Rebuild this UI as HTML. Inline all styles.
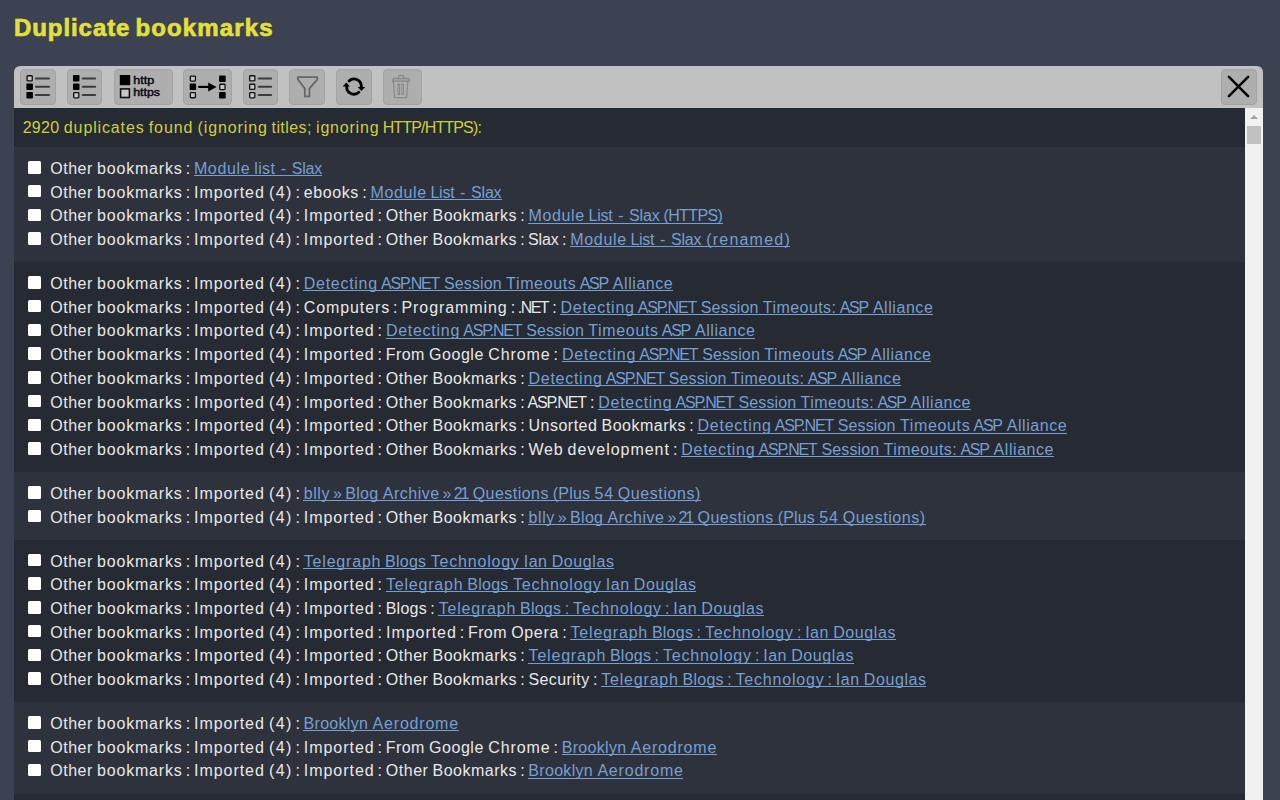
<!DOCTYPE html>
<html><head><meta charset="utf-8"><style>
html,body{margin:0;padding:0;}
body{width:1280px;height:800px;overflow:hidden;background:#3d4252;position:relative;font-family:"Liberation Sans", sans-serif;}
.title{position:absolute;-webkit-text-stroke:0.7px #e2e03c;left:13.5px;top:13px;font-weight:bold;font-size:24.0px;line-height:30px;color:#e2e03c;white-space:nowrap;}
.tb{position:absolute;left:14px;top:65.7px;width:1248.8px;height:42.1px;background:#c1c1c1;border-radius:6px 6px 0 0;}
.btn{position:absolute;top:69.1px;height:35.7px;background:#aeaeae;border-radius:4px;box-sizing:border-box;border:1px solid #a3a3a3;}
.cont{position:absolute;left:14px;top:107.8px;width:1248.8px;height:700px;background:#262a33;overflow:hidden;}
.sb{position:absolute;left:1231px;top:0;width:17.8px;height:700px;background:#f1f1f1;}
.thumb{position:absolute;left:2.2px;top:18.1px;width:13.7px;height:17.9px;background:#c1c1c1;}
.arrow{position:absolute;left:5px;top:7.2px;width:0;height:0;border-left:4px solid transparent;border-right:4px solid transparent;border-bottom:4.9px solid #a3a3a3;}
.status{position:absolute;left:8.5px;top:8px;font-size:16.0px;line-height:24px;color:#cfcf3a;white-space:nowrap;}
.list{position:absolute;left:0;top:39.45px;width:1231px;}
.grp{padding:8.4px 0 11.78px 0;}
.odd{background:#2e323d;}
.row{position:relative;box-sizing:border-box;height:23.73px;padding-top:1.4px;line-height:23.73px;font-size:16.0px;color:#e8e8e8;white-space:nowrap;padding-left:36px;}
.sep{display:inline-block;text-align:center;}
.cb{position:absolute;left:14px;top:5.6px;width:12.5px;height:12.5px;background:#fff;border-radius:1.5px;}
a{color:#779fd2;text-decoration:none;position:relative;}
a::after{content:'';position:absolute;left:0;right:0;top:15.2px;height:1px;background:#779fd2;}
</style></head><body>
<div class="title"><span id="s0_0" style="letter-spacing:0.931px;position:relative;left:0.465px">Duplicate</span><span id="s0_1" style="letter-spacing:-1.703px;position:relative;left:-0.852px"> </span><span id="s0_2" style="letter-spacing:1.139px;position:relative;left:0.569px">bookmarks</span></div>
<div class="tb"></div>
<div class="btn" style="left:20.25px;width:35.35px"></div><div class="btn" style="left:67.2px;width:35.30px"></div><div class="btn" style="left:113.5px;width:59.10px"></div><div class="btn" style="left:183.1px;width:48.60px"></div><div class="btn" style="left:243.2px;width:35.30px"></div><div class="btn" style="left:289.2px;width:35.50px"></div><div class="btn" style="left:336px;width:35.70px"></div><div class="btn" style="left:382.9px;width:38.80px"></div><div class="btn" style="left:1221.25px;width:35.25px"></div><svg style="position:absolute;left:0;top:0" width="1280" height="110" viewBox="0 0 1280 110"><rect x="27.049999999999997" y="75.75" width="5.2" height="5.2" rx="0.8" fill="#c6c6c6" stroke="#111" stroke-width="1.3"/><line x1="35.9" y1="78.4" x2="49.0" y2="78.4" stroke="#3c3c3c" stroke-width="2" stroke-linecap="round"/><rect x="26.4" y="83.6" width="6.5" height="6.5" rx="0.8" fill="#000"/><line x1="35.9" y1="86.8" x2="49.0" y2="86.8" stroke="#3c3c3c" stroke-width="2" stroke-linecap="round"/><rect x="26.4" y="92.0" width="6.5" height="6.5" rx="0.8" fill="#000"/><line x1="35.9" y1="95.1" x2="49.0" y2="95.1" stroke="#3c3c3c" stroke-width="2" stroke-linecap="round"/><rect x="73.0" y="75.1" width="6.5" height="6.5" rx="0.8" fill="#000"/><line x1="82.6" y1="78.4" x2="95.2" y2="78.4" stroke="#3c3c3c" stroke-width="2" stroke-linecap="round"/><rect x="73.0" y="83.6" width="6.5" height="6.5" rx="0.8" fill="#000"/><line x1="82.6" y1="86.8" x2="95.2" y2="86.8" stroke="#3c3c3c" stroke-width="2" stroke-linecap="round"/><rect x="73.65" y="92.65" width="5.2" height="5.2" rx="0.8" fill="#c6c6c6" stroke="#111" stroke-width="1.3"/><line x1="82.6" y1="95.1" x2="95.2" y2="95.1" stroke="#3c3c3c" stroke-width="2" stroke-linecap="round"/><rect x="119.8" y="75" width="10.4" height="10.2" fill="#000"/><rect x="120.6" y="88.9" width="8.8" height="8.6" fill="#c6c6c6" stroke="#111" stroke-width="1.6"/><text x="133.3" y="83.8" font-family="Liberation Sans" font-size="10" fill="#0d0d1a" stroke="#0d0d1a" stroke-width="0.45" textLength="20.8" lengthAdjust="spacingAndGlyphs">http</text><text x="133.3" y="96.1" font-family="Liberation Sans" font-size="10" fill="#0d0d1a" stroke="#0d0d1a" stroke-width="0.45" textLength="26.6" lengthAdjust="spacingAndGlyphs">https</text><rect x="190.35" y="76.05000000000001" width="5.1000000000000005" height="5.1000000000000005" rx="0.8" fill="#c6c6c6" stroke="#111" stroke-width="1.3"/><rect x="189.7" y="83.6" width="6.4" height="6.4" rx="0.8" fill="#000"/><rect x="190.35" y="92.65" width="5.1000000000000005" height="5.1000000000000005" rx="0.8" fill="#c6c6c6" stroke="#111" stroke-width="1.3"/><rect x="219.1" y="75.4" width="6.6" height="6.6" rx="0.8" fill="#000"/><rect x="219.75" y="84.25" width="5.3" height="5.3" rx="0.8" fill="#c6c6c6" stroke="#111" stroke-width="1.3"/><rect x="219.1" y="92.0" width="6.6" height="6.6" rx="0.8" fill="#000"/><line x1="198.3" y1="86.9" x2="209.5" y2="86.9" stroke="#000" stroke-width="2.2"/><path d="M208.2,82.6 L216.6,86.9 L208.2,91.4 Z" fill="#000"/><rect x="249.65" y="75.75" width="5.2" height="5.2" rx="0.8" fill="#c6c6c6" stroke="#111" stroke-width="1.3"/><line x1="258.6" y1="78.4" x2="271.2" y2="78.4" stroke="#3c3c3c" stroke-width="2" stroke-linecap="round"/><rect x="249.65" y="84.25" width="5.2" height="5.2" rx="0.8" fill="#c6c6c6" stroke="#111" stroke-width="1.3"/><line x1="258.6" y1="86.8" x2="271.2" y2="86.8" stroke="#3c3c3c" stroke-width="2" stroke-linecap="round"/><rect x="249.65" y="92.65" width="5.2" height="5.2" rx="0.8" fill="#c6c6c6" stroke="#111" stroke-width="1.3"/><line x1="258.6" y1="95.1" x2="271.2" y2="95.1" stroke="#3c3c3c" stroke-width="2" stroke-linecap="round"/><path d="M297.8,77.1 L317.3,77.1 L317.3,79.3 L309.4,88.6 L309.4,96.4 L304.8,96.4 L304.8,88.6 L297.8,79.3 Z" fill="none" stroke="#666" stroke-width="1.8" stroke-linejoin="round"/><path d="M349.1,80.9 A7.3,7.3 0 0 1 361.3,86.9" fill="none" stroke="#000" stroke-width="2.9" stroke-linecap="round"/><path d="M358.9,92.3 A7.3,7.3 0 0 1 346.7,86.3" fill="none" stroke="#000" stroke-width="2.9" stroke-linecap="round"/><path d="M357.8,86.9 L365.2,86.9 L361.4,90.9 Z" fill="#000"/><path d="M342.6,86.4 L350.0,86.4 L346.2,82.5 Z" fill="#000"/><path d="M398.6,78.2 L398.6,76.3 Q398.6,75.5 399.4,75.5 L402.8,75.5 Q403.6,75.5 403.6,76.3 L403.6,78.2" fill="none" stroke="#858585" stroke-width="1.1"/><path d="M392.4,81.3 L393.2,78.3 L408.8,78.3 L409.6,81.3 Z" fill="#a0a0a0" stroke="#858585" stroke-width="1.1" stroke-linejoin="round"/><path d="M393.4,81.4 L394.6,97.8 L406.6,97.8 L407.8,81.4" fill="none" stroke="#858585" stroke-width="1.1"/><rect x="398.0" y="84.0" width="1.6" height="10.6" fill="none" stroke="#858585" stroke-width="0.9"/><rect x="401.9" y="84.0" width="1.6" height="10.6" fill="none" stroke="#858585" stroke-width="0.9"/><path d="M1228.9,76.9 L1248.1,96.2 M1248.1,76.9 L1228.9,96.2" stroke="#000" stroke-width="2.5" stroke-linecap="round"/></svg>
<div class="cont">
<div class="status"><span id="s1_0" style="letter-spacing:0.312px;position:relative;left:0.156px">2920</span><span id="s1_1" style="letter-spacing:-0.359px;position:relative;left:-0.180px"> </span><span id="s1_2" style="letter-spacing:0.861px;position:relative;left:0.430px">duplicates</span><span id="s1_3" style="letter-spacing:-0.359px;position:relative;left:-0.180px"> </span><span id="s1_4" style="letter-spacing:0.941px;position:relative;left:0.470px">found</span><span id="s1_5" style="letter-spacing:-0.359px;position:relative;left:-0.180px"> </span><span id="s1_6" style="letter-spacing:0.885px;position:relative;left:0.443px">(ignoring</span><span id="s1_7" style="letter-spacing:-0.359px;position:relative;left:-0.180px"> </span><span id="s1_8" style="letter-spacing:0.404px;position:relative;left:0.202px">titles;</span><span id="s1_9" style="letter-spacing:-0.359px;position:relative;left:-0.180px"> </span><span id="s1_10" style="letter-spacing:0.795px;position:relative;left:0.397px">ignoring</span><span id="s1_11" style="letter-spacing:-0.359px;position:relative;left:-0.180px"> </span><span id="s1_12" style="letter-spacing:-0.833px;position:relative;left:-0.417px">HTTP/HTTPS):</span></div>
<div class="list">
<div class="grp odd"><div class="row"><i class="cb"></i><span id="s2_0" style="letter-spacing:0.512px;position:relative;left:0.256px">Other</span><span id="s2_1" style="letter-spacing:-0.359px;position:relative;left:-0.180px"> </span><span id="s2_2" style="letter-spacing:0.802px;position:relative;left:0.401px">bookmarks</span><span id="s3_0" class="sep" style="width:11.438px">:</span><a><span id="s4_0" style="letter-spacing:0.643px;position:relative;left:0.322px">Module</span><span id="s4_1" style="letter-spacing:-0.359px;position:relative;left:-0.180px"> </span><span id="s4_2" style="letter-spacing:0.383px;position:relative;left:0.191px">list</span><span id="s4_3" style="letter-spacing:-0.359px;position:relative;left:-0.180px"> </span><span id="s4_4" style="letter-spacing:3.109px;position:relative;left:1.555px">-</span><span id="s4_5" style="letter-spacing:-0.359px;position:relative;left:-0.180px"> </span><span id="s4_6" style="letter-spacing:-0.176px;position:relative;left:-0.088px">Slax</span></a></div><div class="row"><i class="cb"></i><span id="s5_0" style="letter-spacing:0.512px;position:relative;left:0.256px">Other</span><span id="s5_1" style="letter-spacing:-0.359px;position:relative;left:-0.180px"> </span><span id="s5_2" style="letter-spacing:0.802px;position:relative;left:0.401px">bookmarks</span><span id="s6_0" class="sep" style="width:11.438px">:</span><span id="s7_0" style="letter-spacing:0.951px;position:relative;left:0.476px">Imported</span><span id="s7_1" style="letter-spacing:-0.359px;position:relative;left:-0.180px"> </span><span id="s7_2" style="letter-spacing:1.318px;position:relative;left:0.659px">(4)</span><span id="s8_0" class="sep" style="width:11.438px">:</span><span id="s9_0" style="letter-spacing:0.612px;position:relative;left:0.306px">ebooks</span><span id="s10_0" class="sep" style="width:11.438px">:</span><a><span id="s11_0" style="letter-spacing:0.643px;position:relative;left:0.322px">Module</span><span id="s11_1" style="letter-spacing:-0.359px;position:relative;left:-0.180px"> </span><span id="s11_2" style="letter-spacing:-0.242px;position:relative;left:-0.121px">List</span><span id="s11_3" style="letter-spacing:-0.359px;position:relative;left:-0.180px"> </span><span id="s11_4" style="letter-spacing:3.109px;position:relative;left:1.555px">-</span><span id="s11_5" style="letter-spacing:-0.359px;position:relative;left:-0.180px"> </span><span id="s11_6" style="letter-spacing:-0.176px;position:relative;left:-0.088px">Slax</span></a></div><div class="row"><i class="cb"></i><span id="s12_0" style="letter-spacing:0.512px;position:relative;left:0.256px">Other</span><span id="s12_1" style="letter-spacing:-0.359px;position:relative;left:-0.180px"> </span><span id="s12_2" style="letter-spacing:0.802px;position:relative;left:0.401px">bookmarks</span><span id="s13_0" class="sep" style="width:11.438px">:</span><span id="s14_0" style="letter-spacing:0.951px;position:relative;left:0.476px">Imported</span><span id="s14_1" style="letter-spacing:-0.359px;position:relative;left:-0.180px"> </span><span id="s14_2" style="letter-spacing:1.318px;position:relative;left:0.659px">(4)</span><span id="s15_0" class="sep" style="width:11.438px">:</span><span id="s16_0" style="letter-spacing:0.951px;position:relative;left:0.476px">Imported</span><span id="s17_0" class="sep" style="width:11.438px">:</span><span id="s18_0" style="letter-spacing:0.512px;position:relative;left:0.256px">Other</span><span id="s18_1" style="letter-spacing:-0.359px;position:relative;left:-0.180px"> </span><span id="s18_2" style="letter-spacing:0.498px;position:relative;left:0.249px">Bookmarks</span><span id="s19_0" class="sep" style="width:11.438px">:</span><a><span id="s20_0" style="letter-spacing:0.643px;position:relative;left:0.322px">Module</span><span id="s20_1" style="letter-spacing:-0.359px;position:relative;left:-0.180px"> </span><span id="s20_2" style="letter-spacing:-0.242px;position:relative;left:-0.121px">List</span><span id="s20_3" style="letter-spacing:-0.359px;position:relative;left:-0.180px"> </span><span id="s20_4" style="letter-spacing:3.109px;position:relative;left:1.555px">-</span><span id="s20_5" style="letter-spacing:-0.359px;position:relative;left:-0.180px"> </span><span id="s20_6" style="letter-spacing:-0.176px;position:relative;left:-0.088px">Slax</span><span id="s20_7" style="letter-spacing:-0.359px;position:relative;left:-0.180px"> </span><span id="s20_8" style="letter-spacing:-0.605px;position:relative;left:-0.302px">(HTTPS)</span></a></div><div class="row"><i class="cb"></i><span id="s21_0" style="letter-spacing:0.512px;position:relative;left:0.256px">Other</span><span id="s21_1" style="letter-spacing:-0.359px;position:relative;left:-0.180px"> </span><span id="s21_2" style="letter-spacing:0.802px;position:relative;left:0.401px">bookmarks</span><span id="s22_0" class="sep" style="width:11.438px">:</span><span id="s23_0" style="letter-spacing:0.951px;position:relative;left:0.476px">Imported</span><span id="s23_1" style="letter-spacing:-0.359px;position:relative;left:-0.180px"> </span><span id="s23_2" style="letter-spacing:1.318px;position:relative;left:0.659px">(4)</span><span id="s24_0" class="sep" style="width:11.438px">:</span><span id="s25_0" style="letter-spacing:0.951px;position:relative;left:0.476px">Imported</span><span id="s26_0" class="sep" style="width:11.438px">:</span><span id="s27_0" style="letter-spacing:0.512px;position:relative;left:0.256px">Other</span><span id="s27_1" style="letter-spacing:-0.359px;position:relative;left:-0.180px"> </span><span id="s27_2" style="letter-spacing:0.498px;position:relative;left:0.249px">Bookmarks</span><span id="s28_0" class="sep" style="width:11.438px">:</span><span id="s29_0" style="letter-spacing:-0.176px;position:relative;left:-0.088px">Slax</span><span id="s30_0" class="sep" style="width:11.438px">:</span><a><span id="s31_0" style="letter-spacing:0.643px;position:relative;left:0.322px">Module</span><span id="s31_1" style="letter-spacing:-0.359px;position:relative;left:-0.180px"> </span><span id="s31_2" style="letter-spacing:-0.242px;position:relative;left:-0.121px">List</span><span id="s31_3" style="letter-spacing:-0.359px;position:relative;left:-0.180px"> </span><span id="s31_4" style="letter-spacing:3.109px;position:relative;left:1.555px">-</span><span id="s31_5" style="letter-spacing:-0.359px;position:relative;left:-0.180px"> </span><span id="s31_6" style="letter-spacing:-0.176px;position:relative;left:-0.088px">Slax</span><span id="s31_7" style="letter-spacing:-0.359px;position:relative;left:-0.180px"> </span><span id="s31_8" style="letter-spacing:1.220px;position:relative;left:0.610px">(renamed)</span></a></div></div><div class="grp even"><div class="row"><i class="cb"></i><span id="s32_0" style="letter-spacing:0.512px;position:relative;left:0.256px">Other</span><span id="s32_1" style="letter-spacing:-0.359px;position:relative;left:-0.180px"> </span><span id="s32_2" style="letter-spacing:0.802px;position:relative;left:0.401px">bookmarks</span><span id="s33_0" class="sep" style="width:11.438px">:</span><span id="s34_0" style="letter-spacing:0.951px;position:relative;left:0.476px">Imported</span><span id="s34_1" style="letter-spacing:-0.359px;position:relative;left:-0.180px"> </span><span id="s34_2" style="letter-spacing:1.318px;position:relative;left:0.659px">(4)</span><span id="s35_0" class="sep" style="width:11.438px">:</span><a><span id="s36_0" style="letter-spacing:0.722px;position:relative;left:0.361px">Detecting</span><span id="s36_1" style="letter-spacing:-0.359px;position:relative;left:-0.180px"> </span><span id="s36_2" style="letter-spacing:-1.165px;position:relative;left:-0.583px">ASP.NET</span><span id="s36_3" style="letter-spacing:-0.359px;position:relative;left:-0.180px"> </span><span id="s36_4" style="letter-spacing:0.121px;position:relative;left:0.060px">Session</span><span id="s36_5" style="letter-spacing:-0.359px;position:relative;left:-0.180px"> </span><span id="s36_6" style="letter-spacing:0.652px;position:relative;left:0.326px">Timeouts</span><span id="s36_7" style="letter-spacing:-0.359px;position:relative;left:-0.180px"> </span><span id="s36_8" style="letter-spacing:-1.286px;position:relative;left:-0.643px">ASP</span><span id="s36_9" style="letter-spacing:-0.359px;position:relative;left:-0.180px"> </span><span id="s36_10" style="letter-spacing:0.557px;position:relative;left:0.278px">Alliance</span></a></div><div class="row"><i class="cb"></i><span id="s37_0" style="letter-spacing:0.512px;position:relative;left:0.256px">Other</span><span id="s37_1" style="letter-spacing:-0.359px;position:relative;left:-0.180px"> </span><span id="s37_2" style="letter-spacing:0.802px;position:relative;left:0.401px">bookmarks</span><span id="s38_0" class="sep" style="width:11.438px">:</span><span id="s39_0" style="letter-spacing:0.951px;position:relative;left:0.476px">Imported</span><span id="s39_1" style="letter-spacing:-0.359px;position:relative;left:-0.180px"> </span><span id="s39_2" style="letter-spacing:1.318px;position:relative;left:0.659px">(4)</span><span id="s40_0" class="sep" style="width:11.438px">:</span><span id="s41_0" style="letter-spacing:0.887px;position:relative;left:0.444px">Computers</span><span id="s42_0" class="sep" style="width:11.438px">:</span><span id="s43_0" style="letter-spacing:0.920px;position:relative;left:0.460px">Programming</span><span id="s44_0" class="sep" style="width:11.438px">:</span><span id="s45_0" style="letter-spacing:-1.590px;position:relative;left:-0.795px">.NET</span><span id="s46_0" class="sep" style="width:11.438px">:</span><a><span id="s47_0" style="letter-spacing:0.722px;position:relative;left:0.361px">Detecting</span><span id="s47_1" style="letter-spacing:-0.359px;position:relative;left:-0.180px"> </span><span id="s47_2" style="letter-spacing:-1.165px;position:relative;left:-0.583px">ASP.NET</span><span id="s47_3" style="letter-spacing:-0.359px;position:relative;left:-0.180px"> </span><span id="s47_4" style="letter-spacing:0.121px;position:relative;left:0.060px">Session</span><span id="s47_5" style="letter-spacing:-0.359px;position:relative;left:-0.180px"> </span><span id="s47_6" style="letter-spacing:0.446px;position:relative;left:0.223px">Timeouts:</span><span id="s47_7" style="letter-spacing:-0.359px;position:relative;left:-0.180px"> </span><span id="s47_8" style="letter-spacing:-1.286px;position:relative;left:-0.643px">ASP</span><span id="s47_9" style="letter-spacing:-0.359px;position:relative;left:-0.180px"> </span><span id="s47_10" style="letter-spacing:0.557px;position:relative;left:0.278px">Alliance</span></a></div><div class="row"><i class="cb"></i><span id="s48_0" style="letter-spacing:0.512px;position:relative;left:0.256px">Other</span><span id="s48_1" style="letter-spacing:-0.359px;position:relative;left:-0.180px"> </span><span id="s48_2" style="letter-spacing:0.802px;position:relative;left:0.401px">bookmarks</span><span id="s49_0" class="sep" style="width:11.438px">:</span><span id="s50_0" style="letter-spacing:0.951px;position:relative;left:0.476px">Imported</span><span id="s50_1" style="letter-spacing:-0.359px;position:relative;left:-0.180px"> </span><span id="s50_2" style="letter-spacing:1.318px;position:relative;left:0.659px">(4)</span><span id="s51_0" class="sep" style="width:11.438px">:</span><span id="s52_0" style="letter-spacing:0.951px;position:relative;left:0.476px">Imported</span><span id="s53_0" class="sep" style="width:11.438px">:</span><a><span id="s54_0" style="letter-spacing:0.722px;position:relative;left:0.361px">Detecting</span><span id="s54_1" style="letter-spacing:-0.359px;position:relative;left:-0.180px"> </span><span id="s54_2" style="letter-spacing:-1.165px;position:relative;left:-0.583px">ASP.NET</span><span id="s54_3" style="letter-spacing:-0.359px;position:relative;left:-0.180px"> </span><span id="s54_4" style="letter-spacing:0.121px;position:relative;left:0.060px">Session</span><span id="s54_5" style="letter-spacing:-0.359px;position:relative;left:-0.180px"> </span><span id="s54_6" style="letter-spacing:0.652px;position:relative;left:0.326px">Timeouts</span><span id="s54_7" style="letter-spacing:-0.359px;position:relative;left:-0.180px"> </span><span id="s54_8" style="letter-spacing:-1.286px;position:relative;left:-0.643px">ASP</span><span id="s54_9" style="letter-spacing:-0.359px;position:relative;left:-0.180px"> </span><span id="s54_10" style="letter-spacing:0.557px;position:relative;left:0.278px">Alliance</span></a></div><div class="row"><i class="cb"></i><span id="s55_0" style="letter-spacing:0.512px;position:relative;left:0.256px">Other</span><span id="s55_1" style="letter-spacing:-0.359px;position:relative;left:-0.180px"> </span><span id="s55_2" style="letter-spacing:0.802px;position:relative;left:0.401px">bookmarks</span><span id="s56_0" class="sep" style="width:11.438px">:</span><span id="s57_0" style="letter-spacing:0.951px;position:relative;left:0.476px">Imported</span><span id="s57_1" style="letter-spacing:-0.359px;position:relative;left:-0.180px"> </span><span id="s57_2" style="letter-spacing:1.318px;position:relative;left:0.659px">(4)</span><span id="s58_0" class="sep" style="width:11.438px">:</span><span id="s59_0" style="letter-spacing:0.951px;position:relative;left:0.476px">Imported</span><span id="s60_0" class="sep" style="width:11.438px">:</span><span id="s61_0" style="letter-spacing:0.410px;position:relative;left:0.205px">From</span><span id="s61_1" style="letter-spacing:-0.359px;position:relative;left:-0.180px"> </span><span id="s61_2" style="letter-spacing:0.578px;position:relative;left:0.289px">Google</span><span id="s61_3" style="letter-spacing:-0.359px;position:relative;left:-0.180px"> </span><span id="s61_4" style="letter-spacing:0.906px;position:relative;left:0.453px">Chrome</span><span id="s62_0" class="sep" style="width:11.438px">:</span><a><span id="s63_0" style="letter-spacing:0.722px;position:relative;left:0.361px">Detecting</span><span id="s63_1" style="letter-spacing:-0.359px;position:relative;left:-0.180px"> </span><span id="s63_2" style="letter-spacing:-1.165px;position:relative;left:-0.583px">ASP.NET</span><span id="s63_3" style="letter-spacing:-0.359px;position:relative;left:-0.180px"> </span><span id="s63_4" style="letter-spacing:0.121px;position:relative;left:0.060px">Session</span><span id="s63_5" style="letter-spacing:-0.359px;position:relative;left:-0.180px"> </span><span id="s63_6" style="letter-spacing:0.652px;position:relative;left:0.326px">Timeouts</span><span id="s63_7" style="letter-spacing:-0.359px;position:relative;left:-0.180px"> </span><span id="s63_8" style="letter-spacing:-1.286px;position:relative;left:-0.643px">ASP</span><span id="s63_9" style="letter-spacing:-0.359px;position:relative;left:-0.180px"> </span><span id="s63_10" style="letter-spacing:0.557px;position:relative;left:0.278px">Alliance</span></a></div><div class="row"><i class="cb"></i><span id="s64_0" style="letter-spacing:0.512px;position:relative;left:0.256px">Other</span><span id="s64_1" style="letter-spacing:-0.359px;position:relative;left:-0.180px"> </span><span id="s64_2" style="letter-spacing:0.802px;position:relative;left:0.401px">bookmarks</span><span id="s65_0" class="sep" style="width:11.438px">:</span><span id="s66_0" style="letter-spacing:0.951px;position:relative;left:0.476px">Imported</span><span id="s66_1" style="letter-spacing:-0.359px;position:relative;left:-0.180px"> </span><span id="s66_2" style="letter-spacing:1.318px;position:relative;left:0.659px">(4)</span><span id="s67_0" class="sep" style="width:11.438px">:</span><span id="s68_0" style="letter-spacing:0.951px;position:relative;left:0.476px">Imported</span><span id="s69_0" class="sep" style="width:11.438px">:</span><span id="s70_0" style="letter-spacing:0.512px;position:relative;left:0.256px">Other</span><span id="s70_1" style="letter-spacing:-0.359px;position:relative;left:-0.180px"> </span><span id="s70_2" style="letter-spacing:0.498px;position:relative;left:0.249px">Bookmarks</span><span id="s71_0" class="sep" style="width:11.438px">:</span><a><span id="s72_0" style="letter-spacing:0.722px;position:relative;left:0.361px">Detecting</span><span id="s72_1" style="letter-spacing:-0.359px;position:relative;left:-0.180px"> </span><span id="s72_2" style="letter-spacing:-1.165px;position:relative;left:-0.583px">ASP.NET</span><span id="s72_3" style="letter-spacing:-0.359px;position:relative;left:-0.180px"> </span><span id="s72_4" style="letter-spacing:0.121px;position:relative;left:0.060px">Session</span><span id="s72_5" style="letter-spacing:-0.359px;position:relative;left:-0.180px"> </span><span id="s72_6" style="letter-spacing:0.446px;position:relative;left:0.223px">Timeouts:</span><span id="s72_7" style="letter-spacing:-0.359px;position:relative;left:-0.180px"> </span><span id="s72_8" style="letter-spacing:-1.286px;position:relative;left:-0.643px">ASP</span><span id="s72_9" style="letter-spacing:-0.359px;position:relative;left:-0.180px"> </span><span id="s72_10" style="letter-spacing:0.557px;position:relative;left:0.278px">Alliance</span></a></div><div class="row"><i class="cb"></i><span id="s73_0" style="letter-spacing:0.512px;position:relative;left:0.256px">Other</span><span id="s73_1" style="letter-spacing:-0.359px;position:relative;left:-0.180px"> </span><span id="s73_2" style="letter-spacing:0.802px;position:relative;left:0.401px">bookmarks</span><span id="s74_0" class="sep" style="width:11.438px">:</span><span id="s75_0" style="letter-spacing:0.951px;position:relative;left:0.476px">Imported</span><span id="s75_1" style="letter-spacing:-0.359px;position:relative;left:-0.180px"> </span><span id="s75_2" style="letter-spacing:1.318px;position:relative;left:0.659px">(4)</span><span id="s76_0" class="sep" style="width:11.438px">:</span><span id="s77_0" style="letter-spacing:0.951px;position:relative;left:0.476px">Imported</span><span id="s78_0" class="sep" style="width:11.438px">:</span><span id="s79_0" style="letter-spacing:0.512px;position:relative;left:0.256px">Other</span><span id="s79_1" style="letter-spacing:-0.359px;position:relative;left:-0.180px"> </span><span id="s79_2" style="letter-spacing:0.498px;position:relative;left:0.249px">Bookmarks</span><span id="s80_0" class="sep" style="width:11.438px">:</span><span id="s81_0" style="letter-spacing:-1.165px;position:relative;left:-0.583px">ASP.NET</span><span id="s82_0" class="sep" style="width:11.438px">:</span><a><span id="s83_0" style="letter-spacing:0.722px;position:relative;left:0.361px">Detecting</span><span id="s83_1" style="letter-spacing:-0.359px;position:relative;left:-0.180px"> </span><span id="s83_2" style="letter-spacing:-1.165px;position:relative;left:-0.583px">ASP.NET</span><span id="s83_3" style="letter-spacing:-0.359px;position:relative;left:-0.180px"> </span><span id="s83_4" style="letter-spacing:0.121px;position:relative;left:0.060px">Session</span><span id="s83_5" style="letter-spacing:-0.359px;position:relative;left:-0.180px"> </span><span id="s83_6" style="letter-spacing:0.446px;position:relative;left:0.223px">Timeouts:</span><span id="s83_7" style="letter-spacing:-0.359px;position:relative;left:-0.180px"> </span><span id="s83_8" style="letter-spacing:-1.286px;position:relative;left:-0.643px">ASP</span><span id="s83_9" style="letter-spacing:-0.359px;position:relative;left:-0.180px"> </span><span id="s83_10" style="letter-spacing:0.557px;position:relative;left:0.278px">Alliance</span></a></div><div class="row"><i class="cb"></i><span id="s84_0" style="letter-spacing:0.512px;position:relative;left:0.256px">Other</span><span id="s84_1" style="letter-spacing:-0.359px;position:relative;left:-0.180px"> </span><span id="s84_2" style="letter-spacing:0.802px;position:relative;left:0.401px">bookmarks</span><span id="s85_0" class="sep" style="width:11.438px">:</span><span id="s86_0" style="letter-spacing:0.951px;position:relative;left:0.476px">Imported</span><span id="s86_1" style="letter-spacing:-0.359px;position:relative;left:-0.180px"> </span><span id="s86_2" style="letter-spacing:1.318px;position:relative;left:0.659px">(4)</span><span id="s87_0" class="sep" style="width:11.438px">:</span><span id="s88_0" style="letter-spacing:0.951px;position:relative;left:0.476px">Imported</span><span id="s89_0" class="sep" style="width:11.438px">:</span><span id="s90_0" style="letter-spacing:0.512px;position:relative;left:0.256px">Other</span><span id="s90_1" style="letter-spacing:-0.359px;position:relative;left:-0.180px"> </span><span id="s90_2" style="letter-spacing:0.498px;position:relative;left:0.249px">Bookmarks</span><span id="s91_0" class="sep" style="width:11.438px">:</span><span id="s92_0" style="letter-spacing:0.508px;position:relative;left:0.254px">Unsorted</span><span id="s92_1" style="letter-spacing:-0.359px;position:relative;left:-0.180px"> </span><span id="s92_2" style="letter-spacing:0.498px;position:relative;left:0.249px">Bookmarks</span><span id="s93_0" class="sep" style="width:11.438px">:</span><a><span id="s94_0" style="letter-spacing:0.722px;position:relative;left:0.361px">Detecting</span><span id="s94_1" style="letter-spacing:-0.359px;position:relative;left:-0.180px"> </span><span id="s94_2" style="letter-spacing:-1.165px;position:relative;left:-0.583px">ASP.NET</span><span id="s94_3" style="letter-spacing:-0.359px;position:relative;left:-0.180px"> </span><span id="s94_4" style="letter-spacing:0.121px;position:relative;left:0.060px">Session</span><span id="s94_5" style="letter-spacing:-0.359px;position:relative;left:-0.180px"> </span><span id="s94_6" style="letter-spacing:0.652px;position:relative;left:0.326px">Timeouts</span><span id="s94_7" style="letter-spacing:-0.359px;position:relative;left:-0.180px"> </span><span id="s94_8" style="letter-spacing:-1.286px;position:relative;left:-0.643px">ASP</span><span id="s94_9" style="letter-spacing:-0.359px;position:relative;left:-0.180px"> </span><span id="s94_10" style="letter-spacing:0.557px;position:relative;left:0.278px">Alliance</span></a></div><div class="row"><i class="cb"></i><span id="s95_0" style="letter-spacing:0.512px;position:relative;left:0.256px">Other</span><span id="s95_1" style="letter-spacing:-0.359px;position:relative;left:-0.180px"> </span><span id="s95_2" style="letter-spacing:0.802px;position:relative;left:0.401px">bookmarks</span><span id="s96_0" class="sep" style="width:11.438px">:</span><span id="s97_0" style="letter-spacing:0.951px;position:relative;left:0.476px">Imported</span><span id="s97_1" style="letter-spacing:-0.359px;position:relative;left:-0.180px"> </span><span id="s97_2" style="letter-spacing:1.318px;position:relative;left:0.659px">(4)</span><span id="s98_0" class="sep" style="width:11.438px">:</span><span id="s99_0" style="letter-spacing:0.951px;position:relative;left:0.476px">Imported</span><span id="s100_0" class="sep" style="width:11.438px">:</span><span id="s101_0" style="letter-spacing:0.512px;position:relative;left:0.256px">Other</span><span id="s101_1" style="letter-spacing:-0.359px;position:relative;left:-0.180px"> </span><span id="s101_2" style="letter-spacing:0.498px;position:relative;left:0.249px">Bookmarks</span><span id="s102_0" class="sep" style="width:11.438px">:</span><span id="s103_0" style="letter-spacing:0.714px;position:relative;left:0.357px">Web</span><span id="s103_1" style="letter-spacing:-0.359px;position:relative;left:-0.180px"> </span><span id="s103_2" style="letter-spacing:0.979px;position:relative;left:0.489px">development</span><span id="s104_0" class="sep" style="width:11.438px">:</span><a><span id="s105_0" style="letter-spacing:0.722px;position:relative;left:0.361px">Detecting</span><span id="s105_1" style="letter-spacing:-0.359px;position:relative;left:-0.180px"> </span><span id="s105_2" style="letter-spacing:-1.165px;position:relative;left:-0.583px">ASP.NET</span><span id="s105_3" style="letter-spacing:-0.359px;position:relative;left:-0.180px"> </span><span id="s105_4" style="letter-spacing:0.121px;position:relative;left:0.060px">Session</span><span id="s105_5" style="letter-spacing:-0.359px;position:relative;left:-0.180px"> </span><span id="s105_6" style="letter-spacing:0.446px;position:relative;left:0.223px">Timeouts:</span><span id="s105_7" style="letter-spacing:-0.359px;position:relative;left:-0.180px"> </span><span id="s105_8" style="letter-spacing:-1.286px;position:relative;left:-0.643px">ASP</span><span id="s105_9" style="letter-spacing:-0.359px;position:relative;left:-0.180px"> </span><span id="s105_10" style="letter-spacing:0.557px;position:relative;left:0.278px">Alliance</span></a></div></div><div class="grp odd"><div class="row"><i class="cb"></i><span id="s106_0" style="letter-spacing:0.512px;position:relative;left:0.256px">Other</span><span id="s106_1" style="letter-spacing:-0.359px;position:relative;left:-0.180px"> </span><span id="s106_2" style="letter-spacing:0.802px;position:relative;left:0.401px">bookmarks</span><span id="s107_0" class="sep" style="width:11.438px">:</span><span id="s108_0" style="letter-spacing:0.951px;position:relative;left:0.476px">Imported</span><span id="s108_1" style="letter-spacing:-0.359px;position:relative;left:-0.180px"> </span><span id="s108_2" style="letter-spacing:1.318px;position:relative;left:0.659px">(4)</span><span id="s109_0" class="sep" style="width:11.438px">:</span><a><span id="s110_0" style="letter-spacing:0.617px;position:relative;left:0.309px">blly</span><span id="s110_1" style="letter-spacing:-0.359px;position:relative;left:-0.180px"> </span><span id="s110_2" style="letter-spacing:-1.844px;position:relative;left:-0.922px">»</span><span id="s110_3" style="letter-spacing:-0.359px;position:relative;left:-0.180px"> </span><span id="s110_4" style="letter-spacing:0.312px;position:relative;left:0.156px">Blog</span><span id="s110_5" style="letter-spacing:-0.359px;position:relative;left:-0.180px"> </span><span id="s110_6" style="letter-spacing:0.509px;position:relative;left:0.254px">Archive</span><span id="s110_7" style="letter-spacing:-0.359px;position:relative;left:-0.180px"> </span><span id="s110_8" style="letter-spacing:-1.844px;position:relative;left:-0.922px">»</span><span id="s110_9" style="letter-spacing:-0.359px;position:relative;left:-0.180px"> </span><span id="s110_10" style="letter-spacing:-2.047px;position:relative;left:-1.023px">21</span><span id="s110_11" style="letter-spacing:-0.359px;position:relative;left:-0.180px"> </span><span id="s110_12" style="letter-spacing:0.464px;position:relative;left:0.232px">Questions</span><span id="s110_13" style="letter-spacing:-0.359px;position:relative;left:-0.180px"> </span><span id="s110_14" style="letter-spacing:0.178px;position:relative;left:0.089px">(Plus</span><span id="s110_15" style="letter-spacing:-0.359px;position:relative;left:-0.180px"> </span><span id="s110_16" style="letter-spacing:0.711px;position:relative;left:0.355px">54</span><span id="s110_17" style="letter-spacing:-0.359px;position:relative;left:-0.180px"> </span><span id="s110_18" style="letter-spacing:0.578px;position:relative;left:0.289px">Questions)</span></a></div><div class="row"><i class="cb"></i><span id="s111_0" style="letter-spacing:0.512px;position:relative;left:0.256px">Other</span><span id="s111_1" style="letter-spacing:-0.359px;position:relative;left:-0.180px"> </span><span id="s111_2" style="letter-spacing:0.802px;position:relative;left:0.401px">bookmarks</span><span id="s112_0" class="sep" style="width:11.438px">:</span><span id="s113_0" style="letter-spacing:0.951px;position:relative;left:0.476px">Imported</span><span id="s113_1" style="letter-spacing:-0.359px;position:relative;left:-0.180px"> </span><span id="s113_2" style="letter-spacing:1.318px;position:relative;left:0.659px">(4)</span><span id="s114_0" class="sep" style="width:11.438px">:</span><span id="s115_0" style="letter-spacing:0.951px;position:relative;left:0.476px">Imported</span><span id="s116_0" class="sep" style="width:11.438px">:</span><span id="s117_0" style="letter-spacing:0.512px;position:relative;left:0.256px">Other</span><span id="s117_1" style="letter-spacing:-0.359px;position:relative;left:-0.180px"> </span><span id="s117_2" style="letter-spacing:0.498px;position:relative;left:0.249px">Bookmarks</span><span id="s118_0" class="sep" style="width:11.438px">:</span><a><span id="s119_0" style="letter-spacing:0.617px;position:relative;left:0.309px">blly</span><span id="s119_1" style="letter-spacing:-0.359px;position:relative;left:-0.180px"> </span><span id="s119_2" style="letter-spacing:-1.844px;position:relative;left:-0.922px">»</span><span id="s119_3" style="letter-spacing:-0.359px;position:relative;left:-0.180px"> </span><span id="s119_4" style="letter-spacing:0.312px;position:relative;left:0.156px">Blog</span><span id="s119_5" style="letter-spacing:-0.359px;position:relative;left:-0.180px"> </span><span id="s119_6" style="letter-spacing:0.509px;position:relative;left:0.254px">Archive</span><span id="s119_7" style="letter-spacing:-0.359px;position:relative;left:-0.180px"> </span><span id="s119_8" style="letter-spacing:-1.844px;position:relative;left:-0.922px">»</span><span id="s119_9" style="letter-spacing:-0.359px;position:relative;left:-0.180px"> </span><span id="s119_10" style="letter-spacing:-2.047px;position:relative;left:-1.023px">21</span><span id="s119_11" style="letter-spacing:-0.359px;position:relative;left:-0.180px"> </span><span id="s119_12" style="letter-spacing:0.464px;position:relative;left:0.232px">Questions</span><span id="s119_13" style="letter-spacing:-0.359px;position:relative;left:-0.180px"> </span><span id="s119_14" style="letter-spacing:0.178px;position:relative;left:0.089px">(Plus</span><span id="s119_15" style="letter-spacing:-0.359px;position:relative;left:-0.180px"> </span><span id="s119_16" style="letter-spacing:0.711px;position:relative;left:0.355px">54</span><span id="s119_17" style="letter-spacing:-0.359px;position:relative;left:-0.180px"> </span><span id="s119_18" style="letter-spacing:0.578px;position:relative;left:0.289px">Questions)</span></a></div></div><div class="grp even"><div class="row"><i class="cb"></i><span id="s120_0" style="letter-spacing:0.512px;position:relative;left:0.256px">Other</span><span id="s120_1" style="letter-spacing:-0.359px;position:relative;left:-0.180px"> </span><span id="s120_2" style="letter-spacing:0.802px;position:relative;left:0.401px">bookmarks</span><span id="s121_0" class="sep" style="width:11.438px">:</span><span id="s122_0" style="letter-spacing:0.951px;position:relative;left:0.476px">Imported</span><span id="s122_1" style="letter-spacing:-0.359px;position:relative;left:-0.180px"> </span><span id="s122_2" style="letter-spacing:1.318px;position:relative;left:0.659px">(4)</span><span id="s123_0" class="sep" style="width:11.438px">:</span><a><span id="s124_0" style="letter-spacing:0.806px;position:relative;left:0.403px">Telegraph</span><span id="s124_1" style="letter-spacing:-0.359px;position:relative;left:-0.180px"> </span><span id="s124_2" style="letter-spacing:0.247px;position:relative;left:0.123px">Blogs</span><span id="s124_3" style="letter-spacing:-0.359px;position:relative;left:-0.180px"> </span><span id="s124_4" style="letter-spacing:0.797px;position:relative;left:0.398px">Technology</span><span id="s124_5" style="letter-spacing:-0.359px;position:relative;left:-0.180px"> </span><span id="s124_6" style="letter-spacing:0.552px;position:relative;left:0.276px">Ian</span><span id="s124_7" style="letter-spacing:-0.359px;position:relative;left:-0.180px"> </span><span id="s124_8" style="letter-spacing:0.589px;position:relative;left:0.295px">Douglas</span></a></div><div class="row"><i class="cb"></i><span id="s125_0" style="letter-spacing:0.512px;position:relative;left:0.256px">Other</span><span id="s125_1" style="letter-spacing:-0.359px;position:relative;left:-0.180px"> </span><span id="s125_2" style="letter-spacing:0.802px;position:relative;left:0.401px">bookmarks</span><span id="s126_0" class="sep" style="width:11.438px">:</span><span id="s127_0" style="letter-spacing:0.951px;position:relative;left:0.476px">Imported</span><span id="s127_1" style="letter-spacing:-0.359px;position:relative;left:-0.180px"> </span><span id="s127_2" style="letter-spacing:1.318px;position:relative;left:0.659px">(4)</span><span id="s128_0" class="sep" style="width:11.438px">:</span><span id="s129_0" style="letter-spacing:0.951px;position:relative;left:0.476px">Imported</span><span id="s130_0" class="sep" style="width:11.438px">:</span><a><span id="s131_0" style="letter-spacing:0.806px;position:relative;left:0.403px">Telegraph</span><span id="s131_1" style="letter-spacing:-0.359px;position:relative;left:-0.180px"> </span><span id="s131_2" style="letter-spacing:0.247px;position:relative;left:0.123px">Blogs</span><span id="s131_3" style="letter-spacing:-0.359px;position:relative;left:-0.180px"> </span><span id="s131_4" style="letter-spacing:0.797px;position:relative;left:0.398px">Technology</span><span id="s131_5" style="letter-spacing:-0.359px;position:relative;left:-0.180px"> </span><span id="s131_6" style="letter-spacing:0.552px;position:relative;left:0.276px">Ian</span><span id="s131_7" style="letter-spacing:-0.359px;position:relative;left:-0.180px"> </span><span id="s131_8" style="letter-spacing:0.589px;position:relative;left:0.295px">Douglas</span></a></div><div class="row"><i class="cb"></i><span id="s132_0" style="letter-spacing:0.512px;position:relative;left:0.256px">Other</span><span id="s132_1" style="letter-spacing:-0.359px;position:relative;left:-0.180px"> </span><span id="s132_2" style="letter-spacing:0.802px;position:relative;left:0.401px">bookmarks</span><span id="s133_0" class="sep" style="width:11.438px">:</span><span id="s134_0" style="letter-spacing:0.951px;position:relative;left:0.476px">Imported</span><span id="s134_1" style="letter-spacing:-0.359px;position:relative;left:-0.180px"> </span><span id="s134_2" style="letter-spacing:1.318px;position:relative;left:0.659px">(4)</span><span id="s135_0" class="sep" style="width:11.438px">:</span><span id="s136_0" style="letter-spacing:0.951px;position:relative;left:0.476px">Imported</span><span id="s137_0" class="sep" style="width:11.438px">:</span><span id="s138_0" style="letter-spacing:0.247px;position:relative;left:0.123px">Blogs</span><span id="s139_0" class="sep" style="width:11.438px">:</span><a><span id="s140_0" style="letter-spacing:0.806px;position:relative;left:0.403px">Telegraph</span><span id="s140_1" style="letter-spacing:-0.359px;position:relative;left:-0.180px"> </span><span id="s140_2" style="letter-spacing:0.247px;position:relative;left:0.123px">Blogs</span><span id="s140_3" style="letter-spacing:-0.359px;position:relative;left:-0.180px"> </span><span id="s140_4" style="letter-spacing:-1.188px;position:relative;left:-0.594px">:</span><span id="s140_5" style="letter-spacing:-0.359px;position:relative;left:-0.180px"> </span><span id="s140_6" style="letter-spacing:0.797px;position:relative;left:0.398px">Technology</span><span id="s140_7" style="letter-spacing:-0.359px;position:relative;left:-0.180px"> </span><span id="s140_8" style="letter-spacing:-1.188px;position:relative;left:-0.594px">:</span><span id="s140_9" style="letter-spacing:-0.359px;position:relative;left:-0.180px"> </span><span id="s140_10" style="letter-spacing:0.552px;position:relative;left:0.276px">Ian</span><span id="s140_11" style="letter-spacing:-0.359px;position:relative;left:-0.180px"> </span><span id="s140_12" style="letter-spacing:0.589px;position:relative;left:0.295px">Douglas</span></a></div><div class="row"><i class="cb"></i><span id="s141_0" style="letter-spacing:0.512px;position:relative;left:0.256px">Other</span><span id="s141_1" style="letter-spacing:-0.359px;position:relative;left:-0.180px"> </span><span id="s141_2" style="letter-spacing:0.802px;position:relative;left:0.401px">bookmarks</span><span id="s142_0" class="sep" style="width:11.438px">:</span><span id="s143_0" style="letter-spacing:0.951px;position:relative;left:0.476px">Imported</span><span id="s143_1" style="letter-spacing:-0.359px;position:relative;left:-0.180px"> </span><span id="s143_2" style="letter-spacing:1.318px;position:relative;left:0.659px">(4)</span><span id="s144_0" class="sep" style="width:11.438px">:</span><span id="s145_0" style="letter-spacing:0.951px;position:relative;left:0.476px">Imported</span><span id="s146_0" class="sep" style="width:11.438px">:</span><span id="s147_0" style="letter-spacing:0.951px;position:relative;left:0.476px">Imported</span><span id="s148_0" class="sep" style="width:11.438px">:</span><span id="s149_0" style="letter-spacing:0.410px;position:relative;left:0.205px">From</span><span id="s149_1" style="letter-spacing:-0.359px;position:relative;left:-0.180px"> </span><span id="s149_2" style="letter-spacing:0.684px;position:relative;left:0.342px">Opera</span><span id="s150_0" class="sep" style="width:11.438px">:</span><a><span id="s151_0" style="letter-spacing:0.806px;position:relative;left:0.403px">Telegraph</span><span id="s151_1" style="letter-spacing:-0.359px;position:relative;left:-0.180px"> </span><span id="s151_2" style="letter-spacing:0.247px;position:relative;left:0.123px">Blogs</span><span id="s151_3" style="letter-spacing:-0.359px;position:relative;left:-0.180px"> </span><span id="s151_4" style="letter-spacing:-1.188px;position:relative;left:-0.594px">:</span><span id="s151_5" style="letter-spacing:-0.359px;position:relative;left:-0.180px"> </span><span id="s151_6" style="letter-spacing:0.797px;position:relative;left:0.398px">Technology</span><span id="s151_7" style="letter-spacing:-0.359px;position:relative;left:-0.180px"> </span><span id="s151_8" style="letter-spacing:-1.188px;position:relative;left:-0.594px">:</span><span id="s151_9" style="letter-spacing:-0.359px;position:relative;left:-0.180px"> </span><span id="s151_10" style="letter-spacing:0.552px;position:relative;left:0.276px">Ian</span><span id="s151_11" style="letter-spacing:-0.359px;position:relative;left:-0.180px"> </span><span id="s151_12" style="letter-spacing:0.589px;position:relative;left:0.295px">Douglas</span></a></div><div class="row"><i class="cb"></i><span id="s152_0" style="letter-spacing:0.512px;position:relative;left:0.256px">Other</span><span id="s152_1" style="letter-spacing:-0.359px;position:relative;left:-0.180px"> </span><span id="s152_2" style="letter-spacing:0.802px;position:relative;left:0.401px">bookmarks</span><span id="s153_0" class="sep" style="width:11.438px">:</span><span id="s154_0" style="letter-spacing:0.951px;position:relative;left:0.476px">Imported</span><span id="s154_1" style="letter-spacing:-0.359px;position:relative;left:-0.180px"> </span><span id="s154_2" style="letter-spacing:1.318px;position:relative;left:0.659px">(4)</span><span id="s155_0" class="sep" style="width:11.438px">:</span><span id="s156_0" style="letter-spacing:0.951px;position:relative;left:0.476px">Imported</span><span id="s157_0" class="sep" style="width:11.438px">:</span><span id="s158_0" style="letter-spacing:0.512px;position:relative;left:0.256px">Other</span><span id="s158_1" style="letter-spacing:-0.359px;position:relative;left:-0.180px"> </span><span id="s158_2" style="letter-spacing:0.498px;position:relative;left:0.249px">Bookmarks</span><span id="s159_0" class="sep" style="width:11.438px">:</span><a><span id="s160_0" style="letter-spacing:0.806px;position:relative;left:0.403px">Telegraph</span><span id="s160_1" style="letter-spacing:-0.359px;position:relative;left:-0.180px"> </span><span id="s160_2" style="letter-spacing:0.247px;position:relative;left:0.123px">Blogs</span><span id="s160_3" style="letter-spacing:-0.359px;position:relative;left:-0.180px"> </span><span id="s160_4" style="letter-spacing:-1.188px;position:relative;left:-0.594px">:</span><span id="s160_5" style="letter-spacing:-0.359px;position:relative;left:-0.180px"> </span><span id="s160_6" style="letter-spacing:0.797px;position:relative;left:0.398px">Technology</span><span id="s160_7" style="letter-spacing:-0.359px;position:relative;left:-0.180px"> </span><span id="s160_8" style="letter-spacing:-1.188px;position:relative;left:-0.594px">:</span><span id="s160_9" style="letter-spacing:-0.359px;position:relative;left:-0.180px"> </span><span id="s160_10" style="letter-spacing:0.552px;position:relative;left:0.276px">Ian</span><span id="s160_11" style="letter-spacing:-0.359px;position:relative;left:-0.180px"> </span><span id="s160_12" style="letter-spacing:0.589px;position:relative;left:0.295px">Douglas</span></a></div><div class="row"><i class="cb"></i><span id="s161_0" style="letter-spacing:0.512px;position:relative;left:0.256px">Other</span><span id="s161_1" style="letter-spacing:-0.359px;position:relative;left:-0.180px"> </span><span id="s161_2" style="letter-spacing:0.802px;position:relative;left:0.401px">bookmarks</span><span id="s162_0" class="sep" style="width:11.438px">:</span><span id="s163_0" style="letter-spacing:0.951px;position:relative;left:0.476px">Imported</span><span id="s163_1" style="letter-spacing:-0.359px;position:relative;left:-0.180px"> </span><span id="s163_2" style="letter-spacing:1.318px;position:relative;left:0.659px">(4)</span><span id="s164_0" class="sep" style="width:11.438px">:</span><span id="s165_0" style="letter-spacing:0.951px;position:relative;left:0.476px">Imported</span><span id="s166_0" class="sep" style="width:11.438px">:</span><span id="s167_0" style="letter-spacing:0.512px;position:relative;left:0.256px">Other</span><span id="s167_1" style="letter-spacing:-0.359px;position:relative;left:-0.180px"> </span><span id="s167_2" style="letter-spacing:0.498px;position:relative;left:0.249px">Bookmarks</span><span id="s168_0" class="sep" style="width:11.438px">:</span><span id="s169_0" style="letter-spacing:0.424px;position:relative;left:0.212px">Security</span><span id="s170_0" class="sep" style="width:11.438px">:</span><a><span id="s171_0" style="letter-spacing:0.806px;position:relative;left:0.403px">Telegraph</span><span id="s171_1" style="letter-spacing:-0.359px;position:relative;left:-0.180px"> </span><span id="s171_2" style="letter-spacing:0.247px;position:relative;left:0.123px">Blogs</span><span id="s171_3" style="letter-spacing:-0.359px;position:relative;left:-0.180px"> </span><span id="s171_4" style="letter-spacing:-1.188px;position:relative;left:-0.594px">:</span><span id="s171_5" style="letter-spacing:-0.359px;position:relative;left:-0.180px"> </span><span id="s171_6" style="letter-spacing:0.797px;position:relative;left:0.398px">Technology</span><span id="s171_7" style="letter-spacing:-0.359px;position:relative;left:-0.180px"> </span><span id="s171_8" style="letter-spacing:-1.188px;position:relative;left:-0.594px">:</span><span id="s171_9" style="letter-spacing:-0.359px;position:relative;left:-0.180px"> </span><span id="s171_10" style="letter-spacing:0.552px;position:relative;left:0.276px">Ian</span><span id="s171_11" style="letter-spacing:-0.359px;position:relative;left:-0.180px"> </span><span id="s171_12" style="letter-spacing:0.589px;position:relative;left:0.295px">Douglas</span></a></div></div><div class="grp odd"><div class="row"><i class="cb"></i><span id="s172_0" style="letter-spacing:0.512px;position:relative;left:0.256px">Other</span><span id="s172_1" style="letter-spacing:-0.359px;position:relative;left:-0.180px"> </span><span id="s172_2" style="letter-spacing:0.802px;position:relative;left:0.401px">bookmarks</span><span id="s173_0" class="sep" style="width:11.438px">:</span><span id="s174_0" style="letter-spacing:0.951px;position:relative;left:0.476px">Imported</span><span id="s174_1" style="letter-spacing:-0.359px;position:relative;left:-0.180px"> </span><span id="s174_2" style="letter-spacing:1.318px;position:relative;left:0.659px">(4)</span><span id="s175_0" class="sep" style="width:11.438px">:</span><a><span id="s176_0" style="letter-spacing:0.307px;position:relative;left:0.153px">Brooklyn</span><span id="s176_1" style="letter-spacing:-0.359px;position:relative;left:-0.180px"> </span><span id="s176_2" style="letter-spacing:0.802px;position:relative;left:0.401px">Aerodrome</span></a></div><div class="row"><i class="cb"></i><span id="s177_0" style="letter-spacing:0.512px;position:relative;left:0.256px">Other</span><span id="s177_1" style="letter-spacing:-0.359px;position:relative;left:-0.180px"> </span><span id="s177_2" style="letter-spacing:0.802px;position:relative;left:0.401px">bookmarks</span><span id="s178_0" class="sep" style="width:11.438px">:</span><span id="s179_0" style="letter-spacing:0.951px;position:relative;left:0.476px">Imported</span><span id="s179_1" style="letter-spacing:-0.359px;position:relative;left:-0.180px"> </span><span id="s179_2" style="letter-spacing:1.318px;position:relative;left:0.659px">(4)</span><span id="s180_0" class="sep" style="width:11.438px">:</span><span id="s181_0" style="letter-spacing:0.951px;position:relative;left:0.476px">Imported</span><span id="s182_0" class="sep" style="width:11.438px">:</span><span id="s183_0" style="letter-spacing:0.410px;position:relative;left:0.205px">From</span><span id="s183_1" style="letter-spacing:-0.359px;position:relative;left:-0.180px"> </span><span id="s183_2" style="letter-spacing:0.578px;position:relative;left:0.289px">Google</span><span id="s183_3" style="letter-spacing:-0.359px;position:relative;left:-0.180px"> </span><span id="s183_4" style="letter-spacing:0.906px;position:relative;left:0.453px">Chrome</span><span id="s184_0" class="sep" style="width:11.438px">:</span><a><span id="s185_0" style="letter-spacing:0.307px;position:relative;left:0.153px">Brooklyn</span><span id="s185_1" style="letter-spacing:-0.359px;position:relative;left:-0.180px"> </span><span id="s185_2" style="letter-spacing:0.802px;position:relative;left:0.401px">Aerodrome</span></a></div><div class="row"><i class="cb"></i><span id="s186_0" style="letter-spacing:0.512px;position:relative;left:0.256px">Other</span><span id="s186_1" style="letter-spacing:-0.359px;position:relative;left:-0.180px"> </span><span id="s186_2" style="letter-spacing:0.802px;position:relative;left:0.401px">bookmarks</span><span id="s187_0" class="sep" style="width:11.438px">:</span><span id="s188_0" style="letter-spacing:0.951px;position:relative;left:0.476px">Imported</span><span id="s188_1" style="letter-spacing:-0.359px;position:relative;left:-0.180px"> </span><span id="s188_2" style="letter-spacing:1.318px;position:relative;left:0.659px">(4)</span><span id="s189_0" class="sep" style="width:11.438px">:</span><span id="s190_0" style="letter-spacing:0.951px;position:relative;left:0.476px">Imported</span><span id="s191_0" class="sep" style="width:11.438px">:</span><span id="s192_0" style="letter-spacing:0.512px;position:relative;left:0.256px">Other</span><span id="s192_1" style="letter-spacing:-0.359px;position:relative;left:-0.180px"> </span><span id="s192_2" style="letter-spacing:0.498px;position:relative;left:0.249px">Bookmarks</span><span id="s193_0" class="sep" style="width:11.438px">:</span><a><span id="s194_0" style="letter-spacing:0.307px;position:relative;left:0.153px">Brooklyn</span><span id="s194_1" style="letter-spacing:-0.359px;position:relative;left:-0.180px"> </span><span id="s194_2" style="letter-spacing:0.802px;position:relative;left:0.401px">Aerodrome</span></a></div></div>
</div>
<div class="sb"><div class="arrow"></div><div class="thumb"></div></div>
</div>
</body></html>
